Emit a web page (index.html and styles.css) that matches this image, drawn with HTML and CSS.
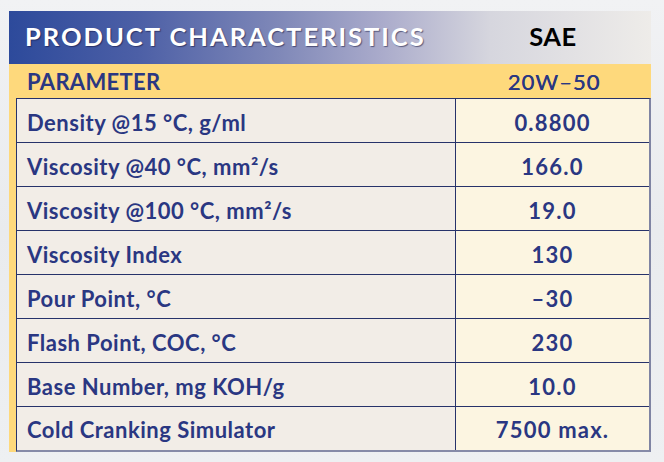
FILE: index.html
```html
<!DOCTYPE html>
<html>
<head>
<meta charset="utf-8">
<link rel="stylesheet" href="styles.css">
</head>
<body>
<div class="page">
  <div class="sheet">
    <div class="head">
      <div class="head-title">PRODUCT CHARACTERISTICS</div>
      <div class="head-sae">SAE</div>
    </div>
    <div class="param">
      <div class="param-label">PARAMETER</div>
      <div class="param-val">20W–50</div>
    </div>
    <div class="body">
      <div class="rows">
        <div class="row"><div class="cell name">Density @15 °C, g/ml</div><div class="cell val">0.8800</div></div>
        <div class="row"><div class="cell name">Viscosity @40 °C, mm²/s</div><div class="cell val">166.0</div></div>
        <div class="row"><div class="cell name">Viscosity @100 °C, mm²/s</div><div class="cell val">19.0</div></div>
        <div class="row"><div class="cell name">Viscosity Index</div><div class="cell val">130</div></div>
        <div class="row"><div class="cell name">Pour Point, °C</div><div class="cell val">–30</div></div>
        <div class="row"><div class="cell name">Flash Point, COC, °C</div><div class="cell val">230</div></div>
        <div class="row"><div class="cell name">Base Number, mg KOH/g</div><div class="cell val">10.0</div></div>
        <div class="row"><div class="cell name">Cold Cranking Simulator</div><div class="cell val">7500 max.</div></div>
      </div>
    </div>
  </div>
</div>
</body>
</html>
```
FILE: styles.css
```css
html, body {
  margin: 0;
  padding: 0;
}
*, *::before, *::after {
  box-sizing: border-box;
}
body {
  width: 664px;
  height: 462px;
  overflow: hidden;
  font-family: Lato, "Open Sans", sans-serif;
  background: linear-gradient(180deg, #f1f2f4 0%, #e9ebee 50%, #eef0f2 100%);
}
.page {
  padding: 11px 0 0 9px;
}
.sheet {
  width: 642px;
}
.head {
  height: 53px;
  display: flex;
  align-items: center;
  background: linear-gradient(90deg, #2d4a9b 0%, #4c5fa6 20%, #7f88b8 42%, #aaabcb 58%, #d6d6de 75%, #eeece9 100%);
}
.head-title {
  flex: 1;
  padding-left: 16px;
  padding-bottom: 4px;
  color: #ffffff;
  font-size: 25.5px;
  font-weight: 700;
  letter-spacing: 2px;
  text-shadow: 1px 1px 1px rgba(20, 20, 60, 0.55);
}
.head-sae {
  width: 194px;
  text-align: center;
  color: #000000;
  font-size: 25.5px;
  font-weight: 700;
  letter-spacing: 0.5px;
  padding-right: 2px;
  padding-bottom: 4px;
}
.param {
  height: 34px;
  display: flex;
  align-items: center;
  background: #fed97c;
  color: #2a3782;
  font-size: 22px;
  font-weight: 700;
}
.param-label {
  flex: 1;
  padding-left: 18px;
  letter-spacing: 0.3px;
}
.param-val {
  width: 194px;
  text-align: center;
  font-weight: 400;
  letter-spacing: 1px;
  text-shadow: 0.4px 0 0 #2a3782;
}
.body {
  border-left: 7px solid #fed97c;
}
.rows {
  border-left: 1.5px solid #27326a;
  border-top: 1.5px solid #27326a;
  border-right: 2px solid #7f84a3;
  border-bottom: 2px solid #868ba8;
}
.row {
  display: grid;
  grid-template-columns: 1fr 194px;
  height: 44px;
  border-bottom: 1.5px solid #27326a;
}
.row:last-child {
  border-bottom: none;
  height: 42.5px;
}
.cell {
  display: flex;
  align-items: center;
  padding-top: 3px;
  color: #2a3782;
  font-size: 22px;
  font-weight: 700;
}
.name {
  background: #f2ede7;
  padding-left: 10px;
  letter-spacing: 0.5px;
}
.val {
  background: #fcf5e1;
  justify-content: center;
  border-left: 1.5px solid #27326a;
  letter-spacing: 1.2px;
}
```
